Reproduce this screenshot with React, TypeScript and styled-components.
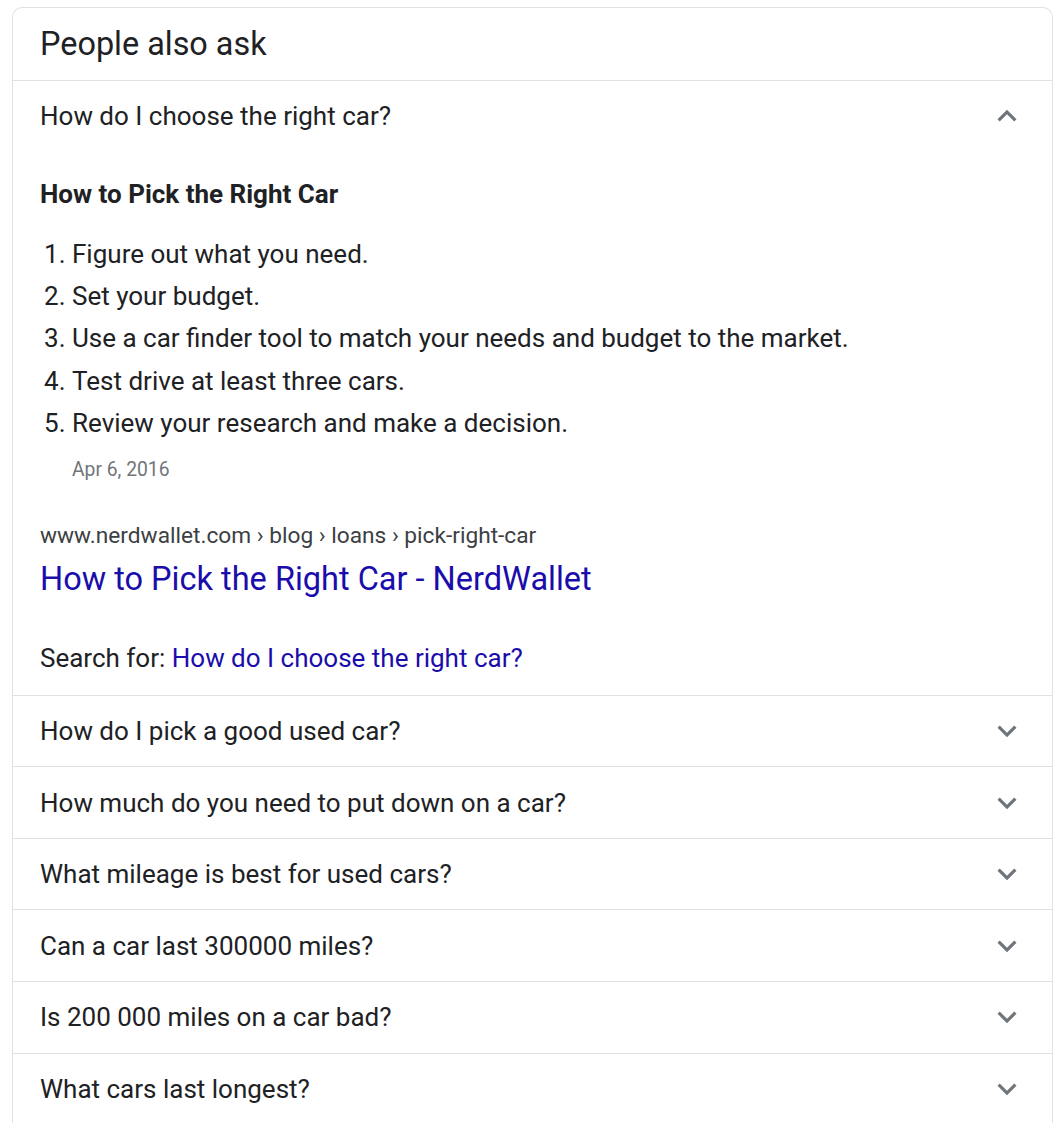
import React from "react"
import styled, { createGlobalStyle } from "styled-components"

const GlobalStyle = createGlobalStyle`
  body {
    margin: 0;
    background: #fff;
    font-family: Roboto, "Liberation Sans", Arial, sans-serif;
    color: #202124;
  }
`

const Page = styled.div`
  padding: 7px 9px 0 12px;
`

const Card = styled.div`
  border: 1px solid #dfe1e5;
  border-bottom: none;
  border-radius: 10px 10px 0 0;
  background: #fff;
`

const Heading = styled.div`
  height: 72px;
  display: flex;
  align-items: center;
  padding: 0 27px;
  font-size: 32.4px;
  color: #202124;
  border-bottom: 1px solid #dfe1e5;
`

const Item = styled.div<{ $last?: boolean }>`
  border-bottom: ${p => (p.$last ? "none" : "1px solid #dfe1e5")};
`

const QuestionRow = styled.div`
  height: 70.6px;
  display: flex;
  align-items: center;
  justify-content: space-between;
  padding: 0 26px 0 27px;
  font-size: 26px;
  color: #202124;
  cursor: pointer;
`

const Chevron = styled.svg<{ $open?: boolean }>`
  width: 38px;
  height: 38px;
  fill: #70757a;
  transform: ${p => (p.$open ? "rotate(180deg)" : "none")};
`

const Answer = styled.div`
  padding: 27px 27px 22px;
`

const AnswerTitle = styled.div`
  font-size: 26px;
  font-weight: 700;
  line-height: 30px;
  color: #202124;
`

const Steps = styled.ol`
  margin: 24px 0 0;
  padding-left: 32px;
  font-size: 26px;
  line-height: 42.4px;
  color: #202124;
`

const DateLine = styled.div`
  margin-top: 13px;
  padding-left: 32px;
  font-size: 19.3px;
  line-height: 24px;
  color: #70757a;
`

const Breadcrumb = styled.div`
  margin-top: 39px;
  font-size: 22.7px;
  line-height: 30px;
  color: #3c4043;
`

const ResultLink = styled.a`
  display: block;
  margin-top: 8px;
  font-size: 32.5px;
  line-height: 40px;
  color: #1a0dab;
  text-decoration: none;
`

const SearchFor = styled.div`
  margin-top: 44px;
  font-size: 26px;
  line-height: 30px;
  color: #202124;

  a {
    color: #1a0dab;
    text-decoration: none;
  }
`

const ChevronIcon = ({ open }: { open?: boolean }) => (
  <Chevron $open={open} viewBox="0 0 24 24">
    <path d="M16.59 8.59L12 13.17 7.41 8.59 6 10l6 6 6-6z" />
  </Chevron>
)

const steps = [
  "Figure out what you need.",
  "Set your budget.",
  "Use a car finder tool to match your needs and budget to the market.",
  "Test drive at least three cars.",
  "Review your research and make a decision.",
]

const moreQuestions = [
  "How do I pick a good used car?",
  "How much do you need to put down on a car?",
  "What mileage is best for used cars?",
  "Can a car last 300000 miles?",
  "Is 200 000 miles on a car bad?",
  "What cars last longest?",
]

const App = () => {
  return (
    <Page>
      <GlobalStyle />
      <Card>
        <Heading>People also ask</Heading>
        <Item>
          <QuestionRow>
            <span>How do I choose the right car?</span>
            <ChevronIcon open />
          </QuestionRow>
          <Answer>
            <AnswerTitle>How to Pick the Right Car</AnswerTitle>
            <Steps>
              {steps.map(s => (
                <li key={s}>{s}</li>
              ))}
            </Steps>
            <DateLine>Apr 6, 2016</DateLine>
            <Breadcrumb>www.nerdwallet.com › blog › loans › pick-right-car</Breadcrumb>
            <ResultLink href="#">How to Pick the Right Car - NerdWallet</ResultLink>
            <SearchFor>
              Search for: <a href="#">How do I choose the right car?</a>
            </SearchFor>
          </Answer>
        </Item>
        {moreQuestions.map((q, i) => (
          <Item key={q} $last={i === moreQuestions.length - 1}>
            <QuestionRow>
              <span>{q}</span>
              <ChevronIcon />
            </QuestionRow>
          </Item>
        ))}
      </Card>
    </Page>
  )
}

export default App
